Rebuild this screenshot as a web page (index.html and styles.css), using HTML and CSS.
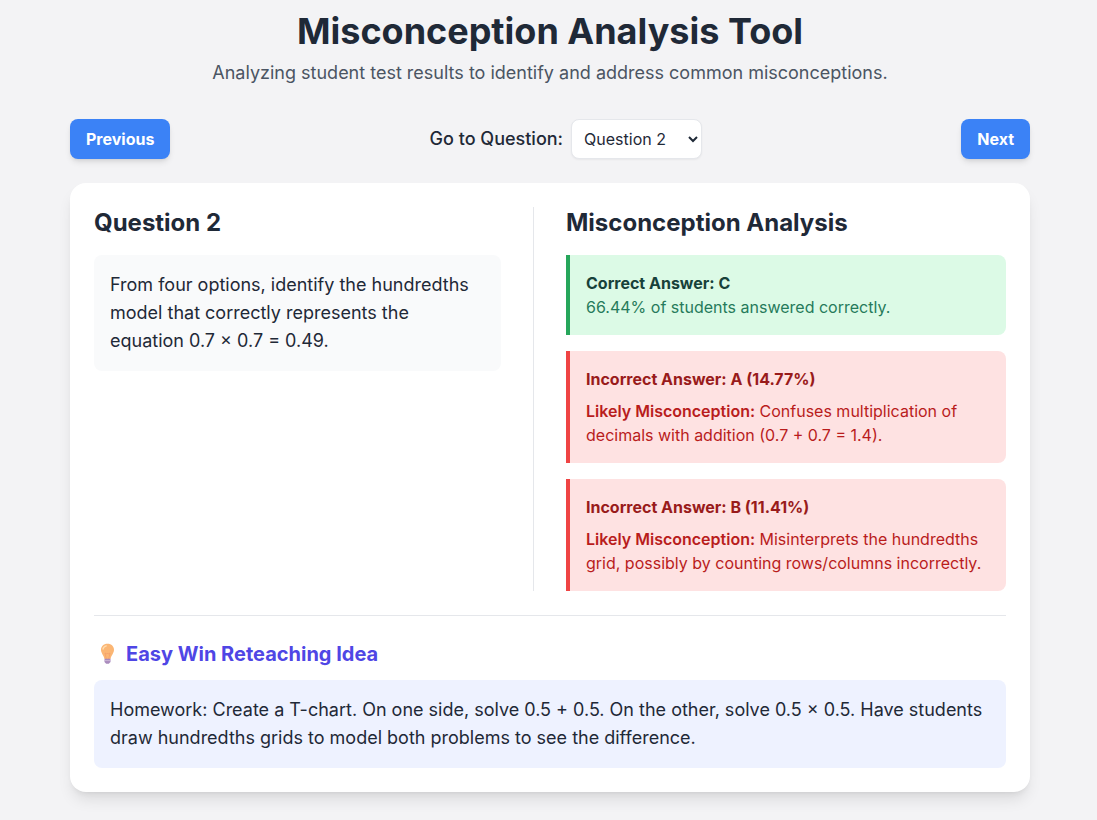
FILE: index.html
```html
<!DOCTYPE html>
<html lang="en">
<head>
<meta charset="utf-8">
<title>Misconception Analysis Tool</title>
<link rel="stylesheet" href="styles.css">
</head>
<body>
<div class="container">
  <header class="header">
    <h1>Misconception Analysis Tool</h1>
    <p>Analyzing student test results to identify and address common misconceptions.</p>
  </header>
  <nav class="nav">
    <button class="btn">Previous</button>
    <div class="picker">
      <label for="question">Go to Question:</label>
      <select id="question"><option>Question 1</option><option selected>Question 2</option><option>Question 10</option></select>
    </div>
    <button class="btn">Next</button>
  </nav>
  <main class="card">
    <div class="columns">
      <section class="question">
        <h2>Question 2</h2>
        <div class="prompt">From four options, identify the hundredths model that correctly represents the equation 0.7 × 0.7 = 0.49.</div>
      </section>
      <section class="analysis">
        <h2>Misconception Analysis</h2>
        <div class="answers">
          <div class="answer correct">
            <p class="title">Correct Answer: C</p>
            <p>66.44% of students answered correctly.</p>
          </div>
          <div class="answer incorrect">
            <p class="title">Incorrect Answer: A (14.77%)</p>
            <p class="detail"><b>Likely Misconception:</b> Confuses multiplication of decimals with addition (0.7 + 0.7 = 1.4).</p>
          </div>
          <div class="answer incorrect">
            <p class="title">Incorrect Answer: B (11.41%)</p>
            <p class="detail"><b>Likely Misconception:</b> Misinterprets the hundredths grid, possibly by counting rows/columns incorrectly.</p>
          </div>
        </div>
      </section>
    </div>
    <section class="reteach">
      <h3>
        <svg class="bulb" viewBox="0 0 27 24" aria-hidden="true">
          <path d="M13.500 1.800c-4 0-6.500 2.700-6.500 6 0 3.400 2.600 5.200 3.500 9.200h6c.9-4 3.500-5.800 3.500-9.200 0-3.300-2.500-6-6.500-6z" fill="#fbb674"/>
          <path d="M9 7c.4-1.800 1.600-2.900 3.300-3.200" fill="none" stroke="#ffdcae" stroke-width="1.300" stroke-linecap="round"/>
          <path d="M12.300 17l-1.300-6 1.700 1 .8-1 .8 1 1.700-1-1.300 6" fill="none" stroke="#f39c69" stroke-width=".7"/>
          <path d="M10.500 16.800h6v3.200l-1.700 1.700h-2.600l-1.700-1.700z" fill="#a98bbd"/>
          <path d="M10.500 18.600h6" stroke="#d2bfdc" stroke-width=".8"/>
        </svg>
        Easy Win Reteaching Idea
      </h3>
      <div class="idea">Homework: Create a T-chart. On one side, solve 0.5 + 0.5. On the other, solve 0.5 × 0.5. Have students draw hundredths grids to model both problems to see the difference.</div>
    </section>
  </main>
</div>
</body>
</html>
```
FILE: styles.css
```css
* { box-sizing: border-box; }
body { margin: 0; background: #f3f3f5; color: #1f2937; font: 16px/24px Inter, sans-serif; }
h1, h2, h3, p { margin: 0; }
.container { width: 960px; margin-left: 70px; padding: 11px 0 28px; }
.header { text-align: center; margin-bottom: 32px; }
.header h1 { font-size: 36px; line-height: 40px; font-weight: 700; }
.header p { margin-top: 8px; font-size: 18px; line-height: 28px; color: #4b5563; }
.nav { display: flex; justify-content: space-between; align-items: center; margin-bottom: 24px; }
.btn { height: 40px; padding: 8px 16px; border: 0; border-radius: 8px; background: #3b82f6; color: #fff; font: 700 16px/24px Inter, sans-serif; box-shadow: 0 4px 6px -1px rgba(0,0,0,.1), 0 2px 4px -2px rgba(0,0,0,.1); }
.picker { display: flex; align-items: center; gap: 8px; }
.picker label { font-size: 18px; line-height: 28px; font-weight: 500; }
.picker select { width: 131px; height: 40px; padding: 8px; border: 1px solid #e5e7eb; border-radius: 8px; background: #fff; color: #1f2937; font: 16px/24px Inter, sans-serif; box-shadow: 0 1px 2px rgba(0,0,0,.05); }
.card { padding: 24px; border-radius: 16px; background: #fff; box-shadow: 0 10px 15px -3px rgba(0,0,0,.1), 0 4px 6px -4px rgba(0,0,0,.1); }
.columns { display: grid; grid-template-columns: 440px 440px; gap: 32px; }
.question { padding-right: 32px; border-right: 1px solid #e5e7eb; }
h2 { font-size: 24px; line-height: 32px; font-weight: 700; margin-bottom: 16px; }
.prompt { padding: 16px; border-radius: 8px; background: #f9fafb; font-size: 18px; line-height: 28px; }
.answers { display: flex; flex-direction: column; gap: 16px; }
.answer { padding: 16px; border-left: 4px solid; border-radius: 0 8px 8px 0; }
.correct { border-color: #26a65b; background: #dcfae6; color: #267a5b; }
.correct .title { color: #17413a; }
.incorrect { border-color: #ef4444; background: #fee2e2; color: #b91c1c; }
.incorrect .title { color: #991b1b; }
.title { font-weight: 700; }
.detail { margin-top: 8px; }
.detail b { font-weight: 600; }
.reteach { margin-top: 24px; padding-top: 24px; border-top: 1px solid #e5e7eb; }
h3 { display: flex; align-items: center; margin-bottom: 12px; font-size: 20px; line-height: 28px; font-weight: 700; color: #4f46e5; }
.bulb { width: 27px; height: 24px; margin-right: 5px; }
.idea { padding: 16px; border-radius: 8px; background: #eef2ff; font-size: 18px; line-height: 28px; }
```
